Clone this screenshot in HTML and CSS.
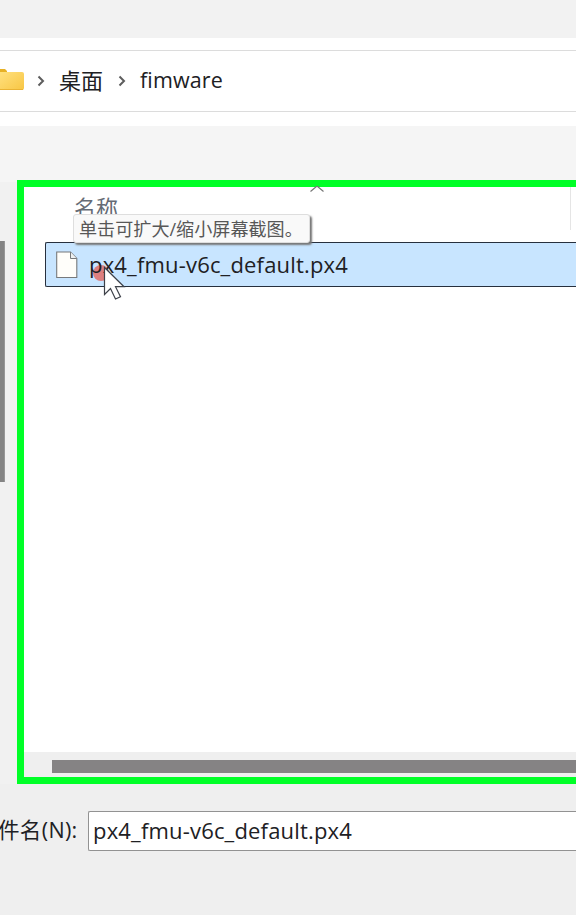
FILE: index.html
```
<!DOCTYPE html>
<html lang="zh-CN">
<head>
<meta charset="utf-8">
<title>fimware</title>
<link rel="stylesheet" href="styles.css">
</head>
<body>
<main class="dialog">
  <div class="titlebar"></div>
  <div class="address-area">
    <nav class="address">
      <svg class="folder" width="24" height="24" viewBox="0 0 24 24">
        <defs><linearGradient id="fg" x1="0" y1="0" x2="1" y2="1"><stop offset="0" stop-color="#ffe07e"/><stop offset="1" stop-color="#f8c644"/></linearGradient></defs>
        <path d="M0 1h5l2 2v4H0z" fill="#e7b126"/>
        <path d="M0 4h22q2 0 2 2v14q0 2-2 2H0z" fill="url(#fg)"/>
        <path d="M0 21.5h23" stroke="#eab334"/>
      </svg>
      <svg class="chevron first" width="8" height="12" viewBox="0 0 8 12"><path d="M1.5 1.5 6 6 1.5 10.5"/></svg>
      <span class="crumb desktop">桌面</span>
      <svg class="chevron second" width="8" height="12" viewBox="0 0 8 12"><path d="M1.5 1.5 6 6 1.5 10.5"/></svg>
      <span class="crumb current">fimware</span>
    </nav>
  </div>
  <div class="toolbar"></div>
  <div class="content">
    <aside class="sidebar"><div class="side-thumb"></div></aside>
    <section class="frame">
      <header class="columns">
        <span class="column-name">名称</span>
        <svg class="sort" width="16" height="8" viewBox="0 0 16 8"><path d="M1.5 5.5 8 0 14.500 5.500"/></svg>
        <span class="divider"></span>
      </header>
      <div class="files">
        <div class="file">
          <svg class="doc" width="22" height="28" viewBox="0 0 22 28"><path d="M.7 1h13.800l6.300 6.500v19H.7z" fill="#fffefa" stroke="#77797b" stroke-width="1.100"/><path d="M14.500 1v6.500h6.300" fill="#edf0f1" stroke="#77797b"/></svg>
          <span class="filename">px4_fmu-v6c_default.px4</span>
        </div>
      </div>
      <div class="hscroll"><div class="hthumb"></div></div>
    </section>
  </div>
  <footer class="footer">
    <label class="label">件名(N):</label>
    <div class="input"><span class="filename">px4_fmu-v6c_default.px4</span></div>
  </footer>
  <div class="tooltip"><span>单击可扩大/缩小屏幕截图。</span></div>
  <div class="click-dot"></div>
  <svg class="cursor" width="24" height="36" viewBox="0 0 24 36"><path d="M1.500 1.500v27l6-6 5 10.500 5-2.300-5-10h8.500z" fill="#fff" stroke="#3d4149" stroke-width="1.200"/></svg>
</main>
</body>
</html>
```
FILE: styles.css
```
* { box-sizing: border-box; }
body { margin: 0; }
.dialog {
  position: relative;
  display: flex;
  flex-direction: column;
  width: 576px;
  height: 915px;
  overflow: hidden;
  background: #efefef;
  color: #202023;
  font: 22px/30px "Open Sans", "Noto Sans CJK SC", sans-serif;
  white-space: nowrap;
}
.titlebar { height: 38px; background: #f2f2f2; }
.address-area { height: 88px; padding-top: 12px; background: #fff; }
.address {
  display: flex;
  align-items: center;
  height: 62px;
  border-top: 1px solid #dcdcdc;
  border-bottom: 1px solid #dcdcdc;
}
.folder { flex: none; margin-top: -2px; }
.chevron { flex: none; fill: none; stroke: #5d5d5d; stroke-width: 2; }
.crumb { padding-bottom: 2px; }
.first { margin-left: 13px; }
.desktop { margin-left: 14px; width: 44px; }
.second { margin-left: 15px; }
.current { margin-left: 14px; font-size: 21.500px; letter-spacing: .12px; }
.toolbar { height: 54px; background: #f5f5f5; }
.content { display: flex; height: 604px; }
.sidebar { flex: none; width: 17px; padding-top: 60px; border-top: 2px solid #f5f5f5; background: #f1f1f1; }
.side-thumb { width: 5px; height: 241px; margin-top: -1px; background: #848484; border-right: 1px solid #979797; }
.frame {
  flex: 1;
  display: flex;
  flex-direction: column;
  border: 7px solid #00ff27;
  border-right: 0;
  background: #fff;
}
.columns { display: flex; height: 55px; }
.column-name { width: 44px; margin: 5px 0 0 50px; color: #656b75; }
.sort { margin: -1px 0 0 191px; fill: none; stroke: #777; stroke-width: 1.200; }
.divider { width: 1px; height: 43px; margin-left: 245px; background: #e5e5e5; }
.files { flex: 1; padding-left: 21px; }
.file {
  display: flex;
  align-items: center;
  height: 45px;
  padding-left: 10px;
  border: 1px solid #27303e;
  border-right: 0;
  border-radius: 2px 0 0 2px;
  background: #c8e5ff;
}
.doc { flex: none; margin-right: 11px; }
.filename { padding-bottom: 2px; font-size: 22px; letter-spacing: .18px; }
.file .filename { z-index: 1; }
.hscroll { height: 25px; padding: 8px 0 0 28px; background: #efefef; }
.hthumb { height: 13px; background: #858384; }
.footer { display: flex; height: 67px; padding-top: 27px; }
.label { width: 90px; margin: 4px 0 0 -2px; font-size: 21.500px; letter-spacing: .35px; }
.input {
  display: flex;
  align-items: center;
  flex: 1;
  height: 40px;
  padding-left: 4px;
  border: 1px solid #929292;
  border-right: 0;
  border-radius: 2px 0 0 2px;
  background: #fff;
}
.tooltip {
  position: absolute;
  z-index: 2;
  left: 73px;
  top: 214px;
  width: 237px;
  height: 29px;
  padding-left: 5px;
  border: 1px solid #dedede;
  border-radius: 3px;
  background: #f9f9f9;
  box-shadow: 2px 2px 2px #777;
  color: #575757;
  font-size: 18.100px;
  line-height: 28px;
}
.click-dot {
  position: absolute;
  left: 93px;
  top: 265px;
  width: 16px;
  height: 16px;
  border-radius: 50%;
  background: rgba(229, 87, 77, .72);
}
.file .filename { position: relative; }
.cursor { position: absolute; z-index: 3; left: 103px; top: 266px; }
```
